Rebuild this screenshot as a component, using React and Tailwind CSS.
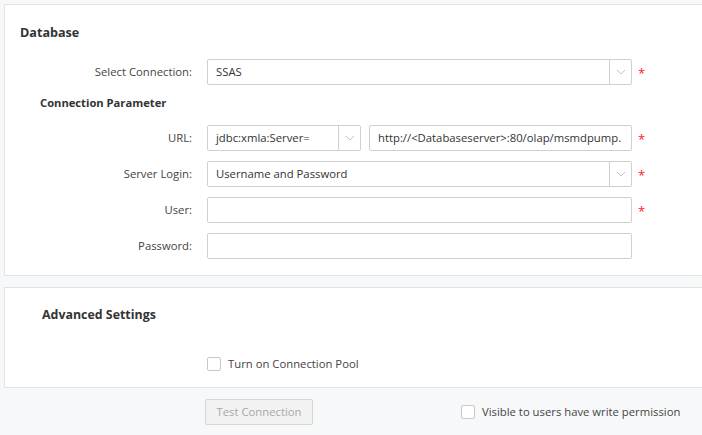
import React from 'react';

function Chevron() {
  return (
    <svg width="10" height="6" viewBox="0 0 10 6" fill="none">
      <path d="M1 1l4 4 4-4" stroke="#c4c4c4" strokeWidth="1" />
    </svg>
  );
}

function Select({ value, width }) {
  return (
    <div className={`flex h-[26px] ${width} border border-[#d0d0d0] rounded-[2px] bg-white`}>
      <div className="flex-1 flex items-center pl-2 text-[11.3px] text-[#333] truncate">{value}</div>
      <div className="w-[22px] border-l border-[#d0d0d0] flex items-center justify-center">
        <Chevron />
      </div>
    </div>
  );
}

function Input({ value, width }) {
  return (
    <div className={`flex items-center h-[26px] ${width} border border-[#d0d0d0] rounded-[2px] bg-white pl-2 text-[11.3px] text-[#333] overflow-hidden whitespace-nowrap`}>
      {value}
    </div>
  );
}

function Row({ label, required, children }) {
  return (
    <div className="flex items-center h-[26px]">
      <div className="w-[187px] text-right text-[11.3px] text-[#444]">{label}</div>
      <div className="ml-[15px] flex gap-2">{children}</div>
      {required && <span className="ml-[6px] text-[#f5222d] text-[13px] leading-none mt-[2px]">*</span>}
    </div>
  );
}

function Checkbox({ label }) {
  return (
    <label className="flex items-center gap-[7px] text-[11.3px] text-[#444]">
      <span className="w-[14px] h-[14px] border border-[#c8c8c8] rounded-[2px] bg-white" />
      {label}
    </label>
  );
}

export default function App() {
  return (
    <div className="w-[702px] h-[435px] bg-[#f7f8fa] pl-1 pt-1 overflow-hidden" style={{ fontFamily: '"Open Sans", "Segoe UI", sans-serif' }}>
      <section className="bg-white border-l border-t border-b border-[#e3e3e3] h-[272px] w-[700px]">
        <h2 className="pl-[15px] pt-[19px] text-[12.6px] font-bold text-[#333] leading-[18px]">Database</h2>
        <div className="mt-[17px]">
          <Row label="Select Connection:" required>
            <Select value="SSAS" width="w-[425px]" />
          </Row>
          <h3 className="pl-[35px] mt-[10px] text-[11.2px] font-bold text-[#333] leading-[16px]">Connection Parameter</h3>
          <div className="mt-[14px] flex flex-col gap-[10px]">
            <Row label="URL:" required>
              <Select value="jdbc:xmla:Server=" width="w-[154px]" />
              <Input value="http://<Databaseserver>:80/olap/msmdpump." width="w-[263px]" />
            </Row>
            <Row label="Server Login:" required>
              <Select value="Username and Password" width="w-[425px]" />
            </Row>
            <Row label="User:" required>
              <Input value="" width="w-[425px]" />
            </Row>
            <Row label="Password:">
              <Input value="" width="w-[425px]" />
            </Row>
          </div>
        </div>
      </section>
      <section className="mt-[11px] bg-white border-l border-t border-b border-[#e3e3e3] h-[101px] w-[700px]">
        <h2 className="pl-[37px] pt-[18px] text-[12.4px] font-bold text-[#333] leading-[18px]">Advanced Settings</h2>
        <div className="pl-[202px] mt-[32px]">
          <Checkbox label="Turn on Connection Pool" />
        </div>
      </section>
      <div className="flex items-center mt-[11px] pl-[201px]">
        <button disabled className="w-[108px] h-[26px] bg-[#f2f2f2] border border-[#d6d6d6] rounded-[2px] text-[11.3px] text-[#a8a8a8]">
          Test Connection
        </button>
        <div className="ml-[148px]">
          <Checkbox label="Visible to users have write permission" />
        </div>
      </div>
    </div>
  );
}
